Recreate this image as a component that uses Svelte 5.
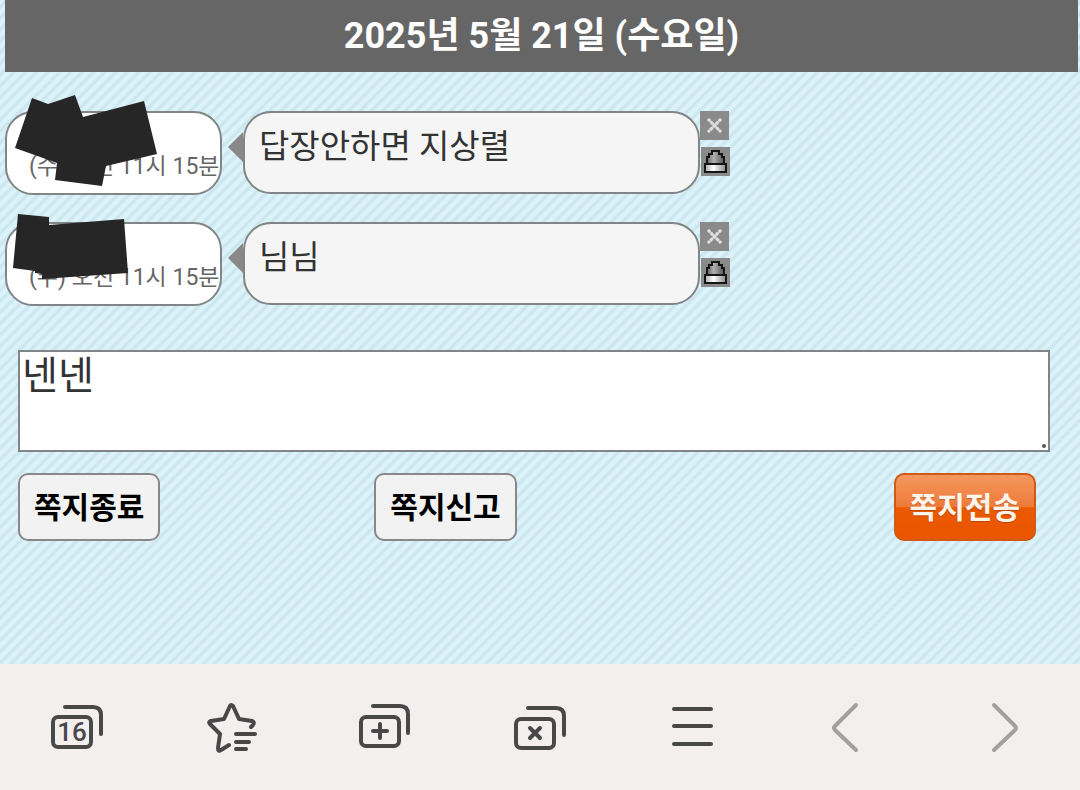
<script>
	let draft = $state('넨넨');

	let messages = $state([
		{
			id: 1,
			time: '(수) 오전 11시 15분',
			text: '답장안하면 지상렬',
			mask: '32,-13 48,-7 75,-16 83,6 144,-10 157,43 106,55 102,75 55,69 57,52 15,37'
		},
		{
			id: 2,
			time: '(수) 오전 11시 15분',
			text: '님님',
			mask: '18,-8 49,-5 49,3 124,-3 128,51 42,57 42,52 35,51 35,49 13,46'
		}
	]);

	const remove = (id) => {
		messages = messages.filter((m) => m.id !== id);
	};
</script>

<div class="page">
	<header><h1>2025년 5월 21일 (수요일)</h1></header>

	<main>
		<ul class="messages">
			{#each messages as message (message.id)}
				<li>
					<div class="sender"><time>{message.time}</time></div>
					<svg class="mask" width="170" height="84" aria-hidden="true">
						<polygon points={message.mask} />
					</svg>
					<p class="bubble">{message.text}</p>
					<div class="tools">
						<button aria-label="삭제" onclick={() => remove(message.id)}>
							<svg viewBox="0 0 29 29">
								<path d="M8 8l13 13M21 8L8 21" stroke="#c8c8c8" stroke-width="2" />
								<path
									d="M8 8l13 13M21 8L8 21"
									stroke="#e0e0e0"
									stroke-width="3"
									stroke-dasharray="3 1"
								/>
							</svg>
						</button>
						<button class="report" aria-label="신고">
							<svg viewBox="0 0 29 29">
								<defs>
									<linearGradient id="lamp{message.id}">
										<stop offset="0" stop-color="#666" />
										<stop offset="0.4" stop-color="#b0b0b0" />
										<stop offset="1" stop-color="#555" />
									</linearGradient>
									<linearGradient id="base{message.id}">
										<stop offset="0" stop-color="#aaa" />
										<stop offset="0.4" stop-color="#fff" />
										<stop offset="1" stop-color="#888" />
									</linearGradient>
								</defs>
								<path
									d="M6 17V10H8V7H11V4H18V7H21V10H23V17Z"
									fill="url(#lamp{message.id})"
									stroke="#151515"
									stroke-width="2"
								/>
								<path
									d="M4 17H25V25H4Z"
									fill="url(#base{message.id})"
									stroke="#151515"
									stroke-width="2"
								/>
							</svg>
						</button>
					</div>
				</li>
			{/each}
		</ul>

		<div class="editor">
			<textarea aria-label="쪽지 내용" bind:value={draft}></textarea>
			<span class="grip"></span>
		</div>

		<div class="actions">
			<button>쪽지종료</button>
			<button>쪽지신고</button>
			<button class="send">쪽지전송</button>
		</div>
	</main>

	<nav>
		<button aria-label="탭 목록">
			<svg viewBox="0 0 60 60">
				<rect x="6" y="20" width="38" height="30" rx="5" />
				<path d="M18 10H46Q54 10 54 18V37" />
				<text x="25" y="44">16</text>
			</svg>
		</button>
		<button aria-label="즐겨찾기">
			<svg viewBox="0 0 60 60">
				<path d="M50 30L52 28Q54 25 51 24L38 22L32 9Q30 7 29 9L23 22L10 24Q7 25 9 27L19 37L17 51Q17 55 20 53L28 48" />
				<path d="M35 37H54M35 45H48M35 52H45" />
			</svg>
		</button>
		<button aria-label="새 탭">
			<svg viewBox="0 0 60 60">
				<rect x="5" y="20" width="38" height="29" rx="5" />
				<path d="M17 9H44Q52 9 52 17V36M17 34H31M24 27V41" />
			</svg>
		</button>
		<button aria-label="탭 닫기">
			<svg viewBox="0 0 60 60">
				<rect x="6" y="22" width="38" height="29" rx="5" />
				<path d="M18 11H46Q54 11 54 19V38M20 31L30 41M30 31L20 41" />
			</svg>
		</button>
		<button aria-label="메뉴">
			<svg viewBox="0 0 60 60">
				<path d="M10 12H47M10 29H47M10 47H47" />
			</svg>
		</button>
		<button class="dim" aria-label="뒤로">
			<svg viewBox="0 0 60 60">
				<path d="M37 8L16 29Q14 31 16 33L37 53" />
			</svg>
		</button>
		<button class="dim" aria-label="앞으로">
			<svg viewBox="0 0 60 60">
				<path d="M21 8L42 29Q44 31 42 33L21 53" />
			</svg>
		</button>
	</nav>
</div>

<style>
	:global(body) {
		font-family: Roboto, 'Noto Sans CJK KR', sans-serif;
	}

	.page {
		min-height: 100vh;
		display: flex;
		flex-direction: column;
		background: repeating-linear-gradient(
			135deg,
			#dcf3fb 0,
			#dcf3fb 2px,
			#cae4ec 5px,
			#dcf3fb 8px
		);
	}

	header {
		margin: 0 2px 0 5px;
		background: #666;
		color: #fff;
		text-align: center;
	}

	h1 {
		margin: 0;
		font-size: 36px;
		line-height: 72px;
	}

	main {
		flex: 1;
		padding-top: 39px;
	}

	button {
		font: inherit;
		padding: 0;
		border: 0;
		cursor: pointer;
	}

	.messages {
		list-style: none;
		margin: 0;
		padding: 0 5px;
		display: grid;
		gap: 27px;
	}

	li {
		position: relative;
		display: flex;
		align-items: flex-start;
	}

	.sender {
		box-sizing: border-box;
		flex: 0 0 217px;
		height: 84px;
		padding: 38px 0 0 22px;
		border: 2px solid #808585;
		border-radius: 28px;
		background: #fff;
		overflow: hidden;
		white-space: nowrap;
	}

	time {
		display: block;
		color: #666;
		font-size: 23px;
		line-height: 32px;
	}

	.mask {
		position: absolute;
		left: -5px;
		top: 0;
		overflow: visible;
		fill: #262626;
	}

	.bubble {
		position: relative;
		box-sizing: border-box;
		flex: 0 1 457px;
		min-height: 83px;
		margin: 0 0 0 21px;
		padding: 10px 14px;
		border: 2px solid #808585;
		border-radius: 28px;
		background: #f5f5f5;
		color: #333;
		font-size: 33px;
		line-height: 48px;
	}

	.bubble::before {
		content: '';
		position: absolute;
		left: -17px;
		top: 19px;
		border: solid transparent;
		border-width: 15px 15px 15px 0;
		border-right-color: #888;
	}

	.tools {
		display: grid;
		gap: 7px;
	}

	.tools button {
		width: 29px;
		height: 29px;
		background: #8a8a8a;
	}

	.tools .report {
		margin-left: 1px;
	}

	.tools svg {
		display: block;
		fill: none;
	}

	.editor {
		position: relative;
		margin: 44px 30px 0 18px;
	}

	textarea {
		display: block;
		box-sizing: border-box;
		width: 100%;
		height: 102px;
		padding: 0 2px;
		border: 2px solid #808585;
		border-radius: 0;
		outline: 0;
		resize: none;
		background: #fff;
		color: #333;
		font: inherit;
		font-size: 39px;
		line-height: 48px;
	}

	.grip {
		position: absolute;
		right: 4px;
		bottom: 4px;
		width: 4px;
		height: 4px;
		border-radius: 50%;
		background: #555;
	}

	.actions {
		display: grid;
		grid-template-columns: 35% 1fr auto;
		justify-items: start;
		margin: 21px 44px 0 18px;
	}

	.actions button {
		box-sizing: border-box;
		height: 68px;
		padding: 2px 14px 0;
		border: 2px solid #888;
		border-radius: 10px;
		background: #f2f2f2;
		color: #000;
		font-size: 30px;
		font-weight: 700;
		line-height: 44px;
	}

	.actions .send {
		border-color: #d05a16;
		background: linear-gradient(#f4975f, #ee7a39 50%, #ea5a00 51%, #ea5500);
		color: #fef4e9;
		text-shadow: 0 1px 1px rgba(0, 0, 0, 0.2);
	}

	nav {
		display: grid;
		grid-template-columns: repeat(7, 1fr);
		height: 126px;
		background: #f3efee;
	}

	nav button {
		display: flex;
		align-items: center;
		justify-content: center;
		background: none;
	}

	nav svg {
		width: 60px;
		height: 60px;
		fill: none;
		stroke: #484848;
		stroke-width: 4;
		stroke-linecap: round;
		stroke-linejoin: round;
	}

	nav text {
		fill: #484848;
		stroke: none;
		font-size: 26px;
		font-weight: 500;
		text-anchor: middle;
	}

	.dim svg {
		stroke: #a3a1a0;
	}
</style>
